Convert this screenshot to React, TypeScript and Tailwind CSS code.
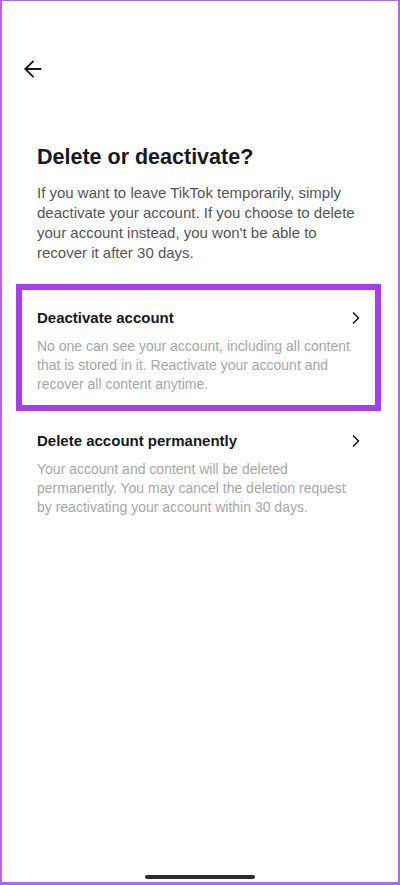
import { ArrowLeft, ChevronRight } from 'lucide-react';

type OptionProps = {
    title: string;
    description: string;
    highlighted?: boolean;
};

function OptionRow({ title, description, highlighted }: OptionProps) {
    return (
        <div
            className={
                highlighted
                    ? 'mr-[17px] ml-[14px] border-[6px] border-[#a43ff0] pt-[17px] pr-[12px] pb-[11px] pl-[15px]'
                    : 'mt-[13px] mr-[17px] ml-[14px] border-[6px] border-transparent pt-0 pr-[12px] pb-[10px] pl-[15px]'
            }
        >
            <div className="flex items-center justify-between">
                <span className="text-[15px] font-semibold leading-[22px] text-[#161823]">{title}</span>
                <ChevronRight className="mr-[-3px] h-[20px] w-[20px] text-[#161823]" strokeWidth={2} />
            </div>
            <p className="mt-[8px] pr-[6px] text-[14px] leading-[19px] text-[#a6a6a9]">{description}</p>
        </div>
    );
}

export default function App() {
    return (
        <div
            className="flex h-[885px] w-[400px] flex-col border-t border-r-2 border-b-[3px] border-l-2 border-[#b067ef] bg-white"
            style={{ fontFamily: '"Liberation Sans", Arial, sans-serif' }}
        >
            <div className="px-[18px] pt-[55px]">
                <ArrowLeft className="h-[26px] w-[26px] text-[#161823]" strokeWidth={1.75} />
            </div>

            <div className="px-[35px] pt-[61px]">
                <h1 className="text-[21.5px] font-bold leading-[28px] text-[#161823]">Delete or deactivate?</h1>
                <p className="mt-[12px] text-[15px] leading-[20px] text-[#545459]">
                    If you want to leave TikTok temporarily, simply deactivate your account. If you choose to
                    delete your account instead, you won't be able to recover it after 30 days.
                </p>
            </div>

            <div className="mt-[21px] flex flex-col">
                <OptionRow
                    highlighted
                    title="Deactivate account"
                    description="No one can see your account, including all content that is stored in it. Reactivate your account and recover all content anytime."
                />
                <OptionRow
                    title="Delete account permanently"
                    description="Your account and content will be deleted permanently. You may cancel the deletion request by reactivating your account within 30 days."
                />
            </div>

            <div className="mt-auto flex justify-center pb-[3px]">
                <div className="h-[4px] w-[110px] rounded-full bg-[#2b2b2b]" />
            </div>
        </div>
    );
}
